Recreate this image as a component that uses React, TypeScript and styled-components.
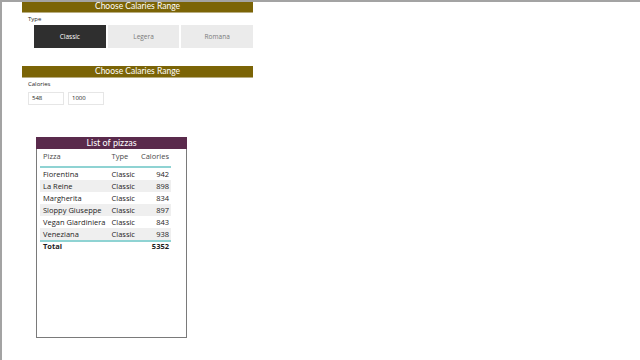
import React from "react";
import styled, { createGlobalStyle } from "styled-components";

type Pizza = { name: string; type: string; calories: number };

const pizzas: Pizza[] = [
  { name: "Fiorentina", type: "Classic", calories: 942 },
  { name: "La Reine", type: "Classic", calories: 898 },
  { name: "Margherita", type: "Classic", calories: 834 },
  { name: "Sloppy Giuseppe", type: "Classic", calories: 897 },
  { name: "Vegan Giardiniera", type: "Classic", calories: 843 },
  { name: "Veneziana", type: "Classic", calories: 938 },
];

const types = ["Classic", "Legera", "Romana"];

const App: React.FC = (): React.ReactElement => {
  const total = pizzas.reduce((s, p) => s + p.calories, 0);
  return (
    <>
      <GlobalStyle />
      <SPage>
        <SSlicer>
          <SBanner>Choose Calaries Range</SBanner>
          <SLabel>Type</SLabel>
          <SButtons>
            {types.map((t, i) => (
              <SButton key={t} active={i === 0}>
                {t}
              </SButton>
            ))}
          </SButtons>
        </SSlicer>

        <SSlicer>
          <SBanner>Choose Calaries Range</SBanner>
          <SLabel>Calories</SLabel>
          <SInputs>
            <SInput>548</SInput>
            <SInput>1000</SInput>
          </SInputs>
        </SSlicer>

        <SCard>
          <SCardTitle>List of pizzas</SCardTitle>
          <STable>
            <thead>
              <tr>
                <STh>Pizza</STh>
                <STh>Type</STh>
                <STh right>Calories</STh>
              </tr>
            </thead>
            <tbody>
              {pizzas.map((p, i) => (
                <STr key={p.name} striped={i % 2 === 1}>
                  <STd>{p.name}</STd>
                  <STd>{p.type}</STd>
                  <STd right>{p.calories}</STd>
                </STr>
              ))}
            </tbody>
            <tfoot>
              <tr>
                <STotal>Total</STotal>
                <STotal />
                <STotal right>{total}</STotal>
              </tr>
            </tfoot>
          </STable>
        </SCard>
      </SPage>
    </>
  );
};

const GlobalStyle = createGlobalStyle`
  html, body {
    margin: 0;
    padding: 0;
    background: #fff;
    font-family: "Open Sans", "Noto Sans", sans-serif;
  }
`;

const SPage = styled.div`
  box-sizing: border-box;
  width: 640px;
  height: 360px;
  border-top: 2px solid #a3a3a3;
  border-left: 2px solid #a3a3a3;
  padding-left: 20px;
  overflow: hidden;
`;

const SSlicer = styled.section`
  width: 231px;
  margin-bottom: 19px;
`;

const SBanner = styled.div`
  height: 11px;
  background: #7b6406;
  border-bottom: 1px solid #b8ad80;
  color: #fff;
  font-family: Lato, "Open Sans", sans-serif;
  font-size: 8.5px;
  line-height: 11px;
  text-align: center;
  margin-top: -1px;
`;

const SLabel = styled.div`
  padding-left: 6px;
  margin-top: 3px;
  font-size: 6px;
  line-height: 7px;
  color: #252423;
`;

const SButtons = styled.div`
  display: flex;
  gap: 2px;
  margin: 2px 0 0 12px;
`;

const SButton = styled.div<{ active?: boolean }>`
  flex: 1;
  height: 23px;
  display: flex;
  align-items: center;
  justify-content: center;
  font-size: 6.5px;
  background: ${(p) => (p.active ? "#2f2f2f" : "#ebebeb")};
  color: ${(p) => (p.active ? "#ffffff" : "#7a7a7a")};
`;

const SInputs = styled.div`
  display: flex;
  gap: 4px;
  margin: 4px 0 0 6px;
`;

const SInput = styled.div`
  box-sizing: border-box;
  width: 36px;
  height: 13px;
  border: 1px solid #e6e6e6;
  padding-left: 3px;
  font-size: 6px;
  line-height: 11px;
  color: #252423;
`;

const SCard = styled.div`
  box-sizing: border-box;
  width: 151px;
  height: 201px;
  margin: 32px 0 0 14px;
  border: 1px solid #7a7a7a;
  border-top: none;
`;

const SCardTitle = styled.div`
  height: 12px;
  margin: 0 -1px;
  background: #5a2a4c;
  color: #fff;
  font-family: Lato, "Open Sans", sans-serif;
  font-size: 9px;
  line-height: 12px;
  text-align: center;
`;

const STable = styled.table`
  border-collapse: collapse;
  margin: 0 0 0 3px;
  width: 131px;
  font-size: 7.5px;
  color: #252423;
`;

const STh = styled.th<{ right?: boolean }>`
  font-weight: normal;
  text-align: ${(p) => (p.right ? "right" : "left")};
  color: #4a4a4a;
  padding: 1px 2px 4px 3px;
  height: 12px;
  line-height: 12px;
  border-bottom: 2px solid #8fd3d3;
  white-space: nowrap;
`;

const STr = styled.tr<{ striped?: boolean }>`
  background: ${(p) => (p.striped ? "#efefef" : "transparent")};
`;

const STd = styled.td<{ right?: boolean }>`
  text-align: ${(p) => (p.right ? "right" : "left")};
  padding: 1px 2px 1px 3px;
  height: 10px;
  line-height: 10px;
  white-space: nowrap;
`;

const STotal = styled.td<{ right?: boolean }>`
  text-align: ${(p) => (p.right ? "right" : "left")};
  font-weight: bold;
  padding: 0 2px 1px 3px;
  border-top: 2px solid #8fd3d3;
  line-height: 9px;
  color: #1d1d1d;
`;

export default App;
